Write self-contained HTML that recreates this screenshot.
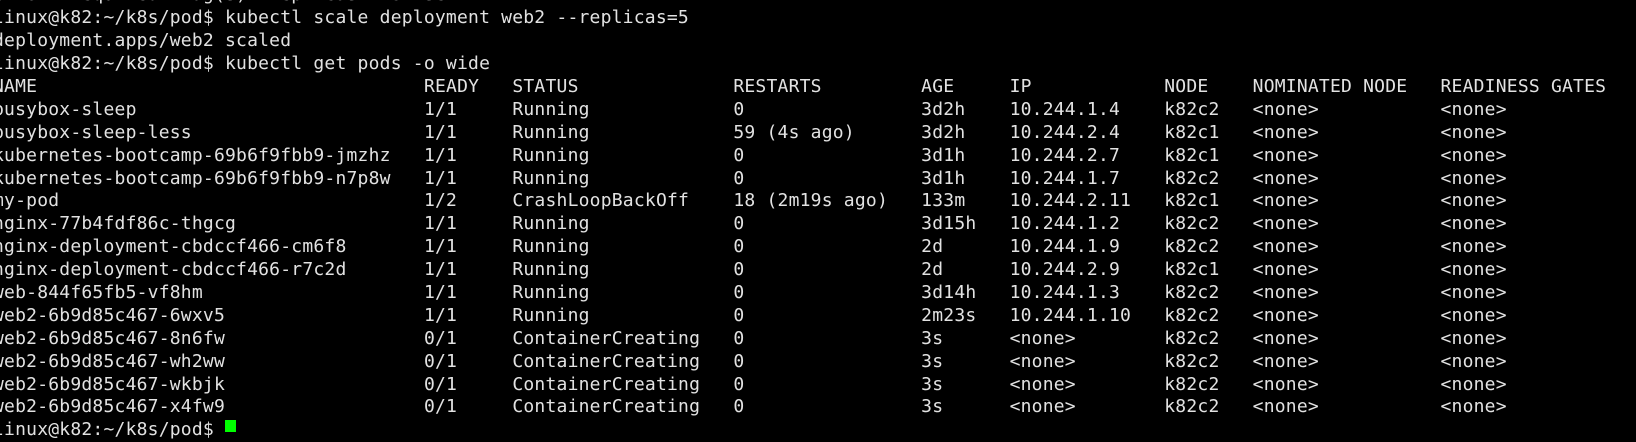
<!DOCTYPE html>
<html><head><meta charset="utf-8"><style>
html,body{margin:0;padding:0;background:#000;width:1636px;height:430px;overflow:hidden}
#t{position:absolute;left:-7px;top:-15.6px;font-family:"DejaVu Sans Mono","Liberation Mono",monospace;font-size:18px;letter-spacing:0.21px;line-height:22.9px;color:#e2e2e2}
.r{height:22.9px;line-height:22.9px;white-space:pre;overflow:visible}
.r span{display:inline-block;vertical-align:top}
.a{width:430.95px}.b{width:88.4px}.c{width:221px}.d{width:187.85px}.e{width:88.4px}.f{width:154.7px}.g{width:88.4px}.h{width:187.85px}
#cur{position:absolute;left:225px;top:420px;width:11px;height:12px;background:#00ff00}
</style></head><body>
<div id="t"><div class="r">error: required flag(s) "replicas" not set</div><div class="r">linux@k82:~/k8s/pod$ kubectl scale deployment web2 --replicas=5</div><div class="r">deployment.apps/web2 scaled</div><div class="r">linux@k82:~/k8s/pod$ kubectl get pods -o wide</div><div class="r"><span class="a">NAME</span><span class="b">READY</span><span class="c">STATUS</span><span class="d">RESTARTS</span><span class="e">AGE</span><span class="f">IP</span><span class="g">NODE</span><span class="h">NOMINATED NODE</span><span>READINESS GATES</span></div><div class="r"><span class="a">busybox-sleep</span><span class="b">1/1</span><span class="c">Running</span><span class="d">0</span><span class="e">3d2h</span><span class="f">10.244.1.4</span><span class="g">k82c2</span><span class="h">&lt;none&gt;</span><span>&lt;none&gt;</span></div><div class="r"><span class="a">busybox-sleep-less</span><span class="b">1/1</span><span class="c">Running</span><span class="d">59 (4s ago)</span><span class="e">3d2h</span><span class="f">10.244.2.4</span><span class="g">k82c1</span><span class="h">&lt;none&gt;</span><span>&lt;none&gt;</span></div><div class="r"><span class="a">kubernetes-bootcamp-69b6f9fbb9-jmzhz</span><span class="b">1/1</span><span class="c">Running</span><span class="d">0</span><span class="e">3d1h</span><span class="f">10.244.2.7</span><span class="g">k82c1</span><span class="h">&lt;none&gt;</span><span>&lt;none&gt;</span></div><div class="r"><span class="a">kubernetes-bootcamp-69b6f9fbb9-n7p8w</span><span class="b">1/1</span><span class="c">Running</span><span class="d">0</span><span class="e">3d1h</span><span class="f">10.244.1.7</span><span class="g">k82c2</span><span class="h">&lt;none&gt;</span><span>&lt;none&gt;</span></div><div class="r"><span class="a">my-pod</span><span class="b">1/2</span><span class="c">CrashLoopBackOff</span><span class="d">18 (2m19s ago)</span><span class="e">133m</span><span class="f">10.244.2.11</span><span class="g">k82c1</span><span class="h">&lt;none&gt;</span><span>&lt;none&gt;</span></div><div class="r"><span class="a">nginx-77b4fdf86c-thgcg</span><span class="b">1/1</span><span class="c">Running</span><span class="d">0</span><span class="e">3d15h</span><span class="f">10.244.1.2</span><span class="g">k82c2</span><span class="h">&lt;none&gt;</span><span>&lt;none&gt;</span></div><div class="r"><span class="a">nginx-deployment-cbdccf466-cm6f8</span><span class="b">1/1</span><span class="c">Running</span><span class="d">0</span><span class="e">2d</span><span class="f">10.244.1.9</span><span class="g">k82c2</span><span class="h">&lt;none&gt;</span><span>&lt;none&gt;</span></div><div class="r"><span class="a">nginx-deployment-cbdccf466-r7c2d</span><span class="b">1/1</span><span class="c">Running</span><span class="d">0</span><span class="e">2d</span><span class="f">10.244.2.9</span><span class="g">k82c1</span><span class="h">&lt;none&gt;</span><span>&lt;none&gt;</span></div><div class="r"><span class="a">web-844f65fb5-vf8hm</span><span class="b">1/1</span><span class="c">Running</span><span class="d">0</span><span class="e">3d14h</span><span class="f">10.244.1.3</span><span class="g">k82c2</span><span class="h">&lt;none&gt;</span><span>&lt;none&gt;</span></div><div class="r"><span class="a">web2-6b9d85c467-6wxv5</span><span class="b">1/1</span><span class="c">Running</span><span class="d">0</span><span class="e">2m23s</span><span class="f">10.244.1.10</span><span class="g">k82c2</span><span class="h">&lt;none&gt;</span><span>&lt;none&gt;</span></div><div class="r"><span class="a">web2-6b9d85c467-8n6fw</span><span class="b">0/1</span><span class="c">ContainerCreating</span><span class="d">0</span><span class="e">3s</span><span class="f">&lt;none&gt;</span><span class="g">k82c2</span><span class="h">&lt;none&gt;</span><span>&lt;none&gt;</span></div><div class="r"><span class="a">web2-6b9d85c467-wh2ww</span><span class="b">0/1</span><span class="c">ContainerCreating</span><span class="d">0</span><span class="e">3s</span><span class="f">&lt;none&gt;</span><span class="g">k82c2</span><span class="h">&lt;none&gt;</span><span>&lt;none&gt;</span></div><div class="r"><span class="a">web2-6b9d85c467-wkbjk</span><span class="b">0/1</span><span class="c">ContainerCreating</span><span class="d">0</span><span class="e">3s</span><span class="f">&lt;none&gt;</span><span class="g">k82c2</span><span class="h">&lt;none&gt;</span><span>&lt;none&gt;</span></div><div class="r"><span class="a">web2-6b9d85c467-x4fw9</span><span class="b">0/1</span><span class="c">ContainerCreating</span><span class="d">0</span><span class="e">3s</span><span class="f">&lt;none&gt;</span><span class="g">k82c2</span><span class="h">&lt;none&gt;</span><span>&lt;none&gt;</span></div><div class="r">linux@k82:~/k8s/pod$ </div></div>
<div id="cur"></div>
</body></html>
